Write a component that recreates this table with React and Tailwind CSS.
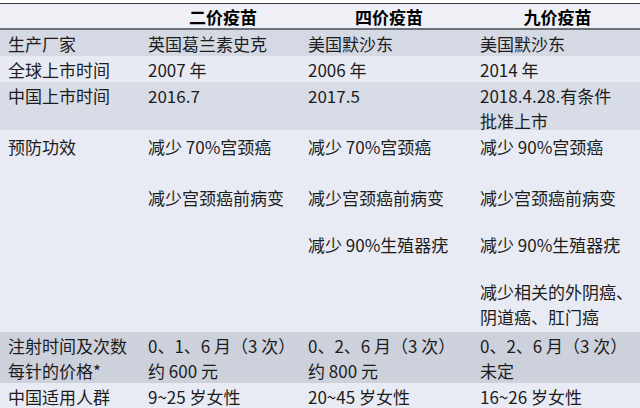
import React from 'react';

const FONT = { fontFamily: '"Noto Sans CJK SC", "Noto Sans", sans-serif' };

const widths = ['w-[143px] pl-[8px]', 'w-[160px] pl-[5px]', 'w-[172px] pl-[5px]', 'w-[165px] pl-[5px]'];

function Row({ bg, h, cells }) {
  return (
    <div className={`flex ${bg} ${h}`}>
      {cells.map((c, i) => (
        <div key={i} className={`${widths[i]} shrink-0 pt-[1px]`}>
          {c}
        </div>
      ))}
    </div>
  );
}

export default function App() {
  return (
    <div className="w-[640px] h-[408px] overflow-hidden bg-white pt-[3px] text-[17px] leading-[25px] text-[#1c1c1c]" style={FONT}>
      {/* header */}
      <div className="flex h-[27px] border-t border-[#3a3a3a] border-b-2 border-b-[#6b6e75] bg-[#eef0f5] font-bold text-black">
        <div className="w-[143px] shrink-0" />
        <div className="w-[160px] shrink-0 text-center">二价疫苗</div>
        <div className="w-[172px] shrink-0 text-center">四价疫苗</div>
        <div className="w-[165px] shrink-0 text-center">九价疫苗</div>
      </div>

      <Row bg="bg-[#d4d9e3]" h="h-[26px]" cells={['生产厂家', '英国葛兰素史克', '美国默沙东', '美国默沙东']} />
      <Row bg="bg-[#e7eaf2]" h="h-[26px]" cells={['全球上市时间', '2007 年', '2006 年', '2014 年']} />
      <Row
        bg="bg-[#d8dce6]"
        h="h-[48px]"
        cells={['中国上市时间', '2016.7', '2017.5', <>2018.4.28.有条件<br />批准上市</>]}
      />

      {/* 预防功效 */}
      <div className="flex h-[202px] bg-[#e8ebf3] pt-[4px]">
        <div className="w-[143px] shrink-0 pl-[8px]">预防功效</div>
        <div className="w-[160px] shrink-0 pl-[5px]">
          <div>减少 70%宫颈癌</div>
          <div className="mt-[26px]">减少宫颈癌前病变</div>
        </div>
        <div className="w-[172px] shrink-0 pl-[5px]">
          <div>减少 70%宫颈癌</div>
          <div className="mt-[26px]">减少宫颈癌前病变</div>
          <div className="mt-[22px]">减少 90%生殖器疣</div>
        </div>
        <div className="w-[165px] shrink-0 pl-[5px]">
          <div>减少 90%宫颈癌</div>
          <div className="mt-[26px]">减少宫颈癌前病变</div>
          <div className="mt-[22px]">减少 90%生殖器疣</div>
          <div className="mt-[22px]">减少相关的外阴癌、</div>
          <div>阴道癌、肛门癌</div>
        </div>
      </div>

      <Row bg="bg-[#ccd1dc]" h="h-[25px]" cells={['注射时间及次数', '0、1、6 月（3 次）', '0、2、6 月（3 次）', '0、2、6 月（3 次）']} />
      <Row bg="bg-[#ccd1dc]" h="h-[26px]" cells={['每针的价格*', '约 600 元', '约 800 元', '未定']} />
      <Row bg="bg-[#e8ebf3]" h="h-[25px]" cells={['中国适用人群', '9~25 岁女性', '20~45 岁女性', '16~26 岁女性']} />
    </div>
  );
}
